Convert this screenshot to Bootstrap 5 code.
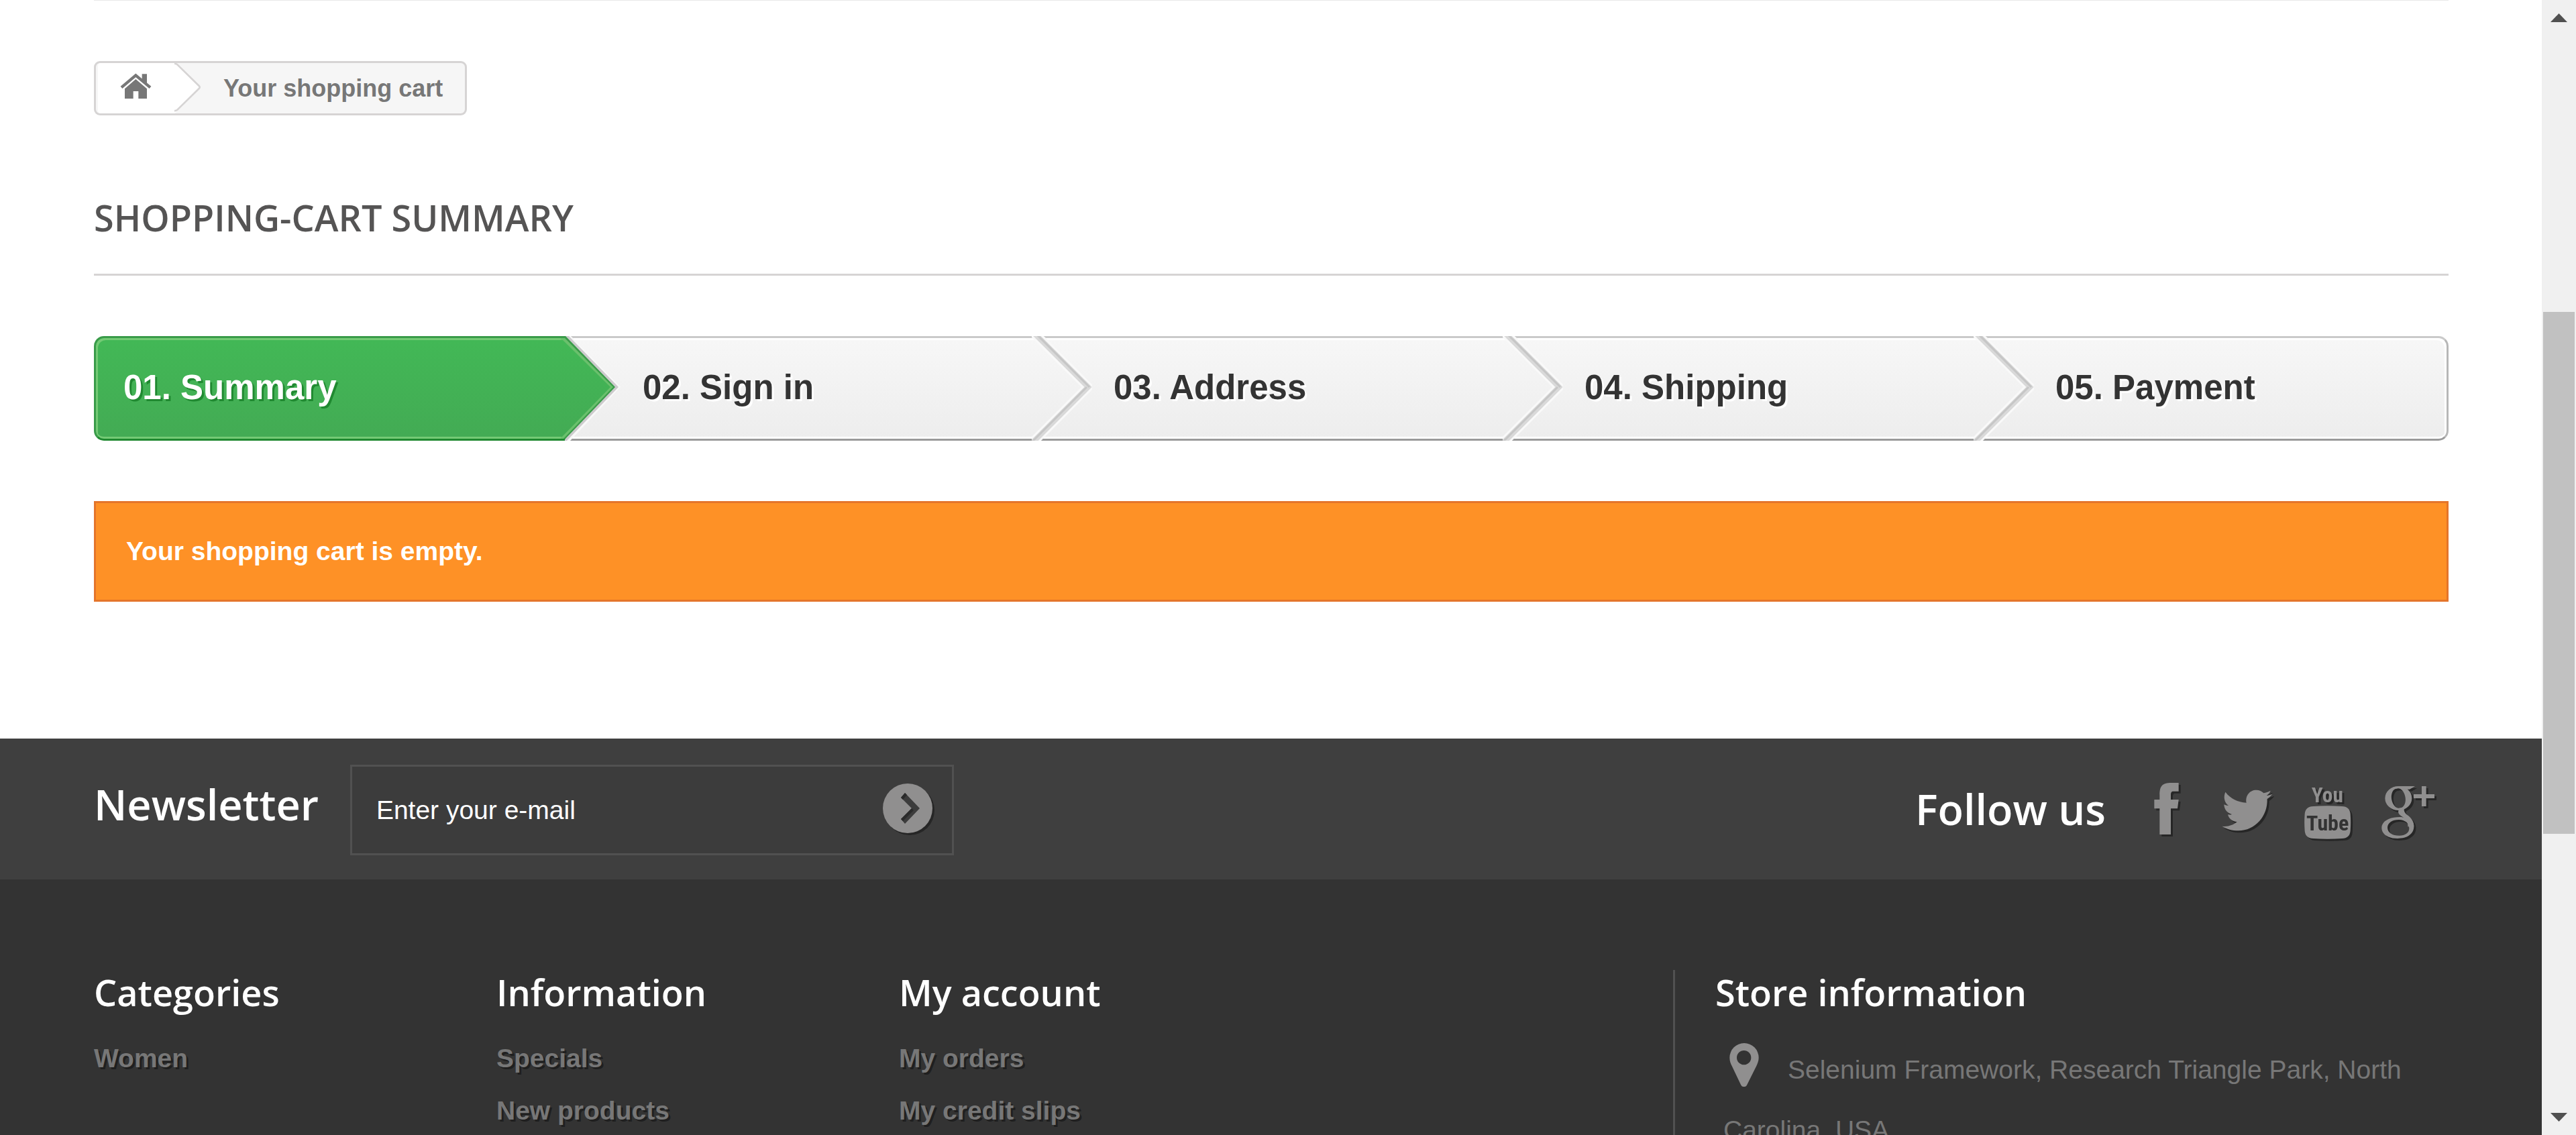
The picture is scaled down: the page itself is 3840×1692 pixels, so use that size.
<!DOCTYPE html>
<html lang="en">
<head>
<meta charset="utf-8">
<meta name="viewport" content="width=device-width, initial-scale=1">
<title>Order - My Store</title>
<link href="https://cdn.jsdelivr.net/npm/bootstrap@5.3.0/dist/css/bootstrap.min.css" rel="stylesheet">
<style>
html { height: 100%; }
body { height: 100%; overflow: hidden; background: #fff; color: #777; font: 39px/54px "Liberation Sans", Arial, sans-serif; }
.page-main { min-width: 0; overflow: hidden; }
.inner { padding: 0 139px 0 140px; }
.top-rule { height: 1px; background: #e9e9e9; }
a { text-decoration: none; }
svg { display: block; }
h1, h2, .bar-title { font-family: "Open Sans", sans-serif; font-weight: 600; margin: 0; }

.crumbs { margin-top: 90px; width: fit-content; height: 81px; border: 3px solid #d6d4d4; border-radius: 9px; background: #f6f6f6; font-size: 36px; font-weight: 700; overflow: hidden; }
.crumbs .here { color: #777; padding: 0 33px 0 32px; line-height: 75px; }

.page-heading { margin-top: 69px; padding: 50px 0 51px; font-size: 54px; line-height: 66px; color: #555454; text-transform: uppercase; border-bottom: 3px solid #d6d4d4; }

.steps { margin: 90px 0; padding: 0; list-style: none; }
.steps li { flex: 0 0 20%; min-width: 0; position: relative; height: 156px; padding-left: 116px; font-size: 51px; font-weight: 700; line-height: 148px; color: #333; text-shadow: 3px 3px 0 #fff; border: solid #b7b7b7; border-width: 3px 0; border-top-color: #cacaca; border-bottom-color: #9a9a9a; background: linear-gradient(#f7f7f7, #ededed); box-shadow: inset 0 3px 0 #fff, inset 0 -3px 0 #fff; }
.steps li:last-child { border-right-width: 3px; border-radius: 0 15px 15px 0; box-shadow: inset -3px 3px 0 #fff, inset 0 -3px 0 #fff; }
.steps li.current { padding-left: 41px; color: #fff; text-shadow: 3px 3px 0 #208931; border-color: #399b49; border-left-width: 3px; border-bottom-color: #208931; border-radius: 15px 0 0 15px; background: linear-gradient(#42b856, #43ab54); box-shadow: inset 3px 3px 0 #74ca75, inset 0 -3px 0 #74ca75; }
.steps .arrow { position: absolute; top: -3px; right: -84px; width: 90px; height: 156px; z-index: 1; }

.alert-empty { margin: 0; height: 150px; padding: 0 45px; border: 3px solid #e4752b; background: #fe9126; color: #fff; font-weight: 700; line-height: 144px; }

.social-bar { margin-top: 204px; height: 210px; padding-top: 3px; background: #3f3f3f; color: #fff; }
.bar-title { font-size: 63px; line-height: 72px; }
.bar-title.news { padding-bottom: 17px; }
.bar-title.follow { padding-bottom: 3px; margin-right: 31px; }
.mail-box { width: 900px; height: 135px; margin-left: 47px; border: 3px solid #515151; background: #3c3c3c; padding: 0 25px 0 36px; }
.mail-box input { color: #fff; font-size: 39px; border: 0; background: none; outline: 0; min-width: 0; padding: 0; }
.mail-box input::placeholder { color: #fff; opacity: 1; }
.mail-box button { border: 0; background: none; padding: 0; }
.social svg { width: 120px; height: 109px; fill: #908f8f; filter: drop-shadow(3px 3px 0 #262626); }
.social text { font-family: "Liberation Sans Narrow", "Roboto Condensed", "Open Sans Condensed", "DejaVu Sans Condensed", "Roboto", sans-serif; font-weight: 700; text-anchor: middle; }

.foot { background: #333; flex: 1; min-height: 0; overflow: hidden; padding-top: 135px; }
.foot h2 { font-size: 54px; line-height: 66px; color: #fff; }
.foot .links { width: 600px; }
.foot ul { list-style: none; margin: 39px 0 0; padding: 0; }
.foot li { line-height: 54px; margin-bottom: 24px; }
.foot li a { color: #777; font-weight: 700; text-shadow: 3px 3px 0 rgba(0,0,0,.4); }
.store { width: 1156px; min-height: 300px; border-left: 3px solid #515151; padding-left: 60px; }
.store p { margin: 38px 0 0; padding-left: 12px; line-height: 90px; }
.store svg { display: inline-block; vertical-align: -12px; margin: 0 43px 0 9px; }

.scroller { width: 51px; background: #f0f0f0; padding: 20px 2px; }
.scroller .thumb { height: 778px; margin-top: 432px; background: #c1c1c1; }
.scroller svg { margin: 0 auto; }
</style>
</head>
<body class="d-flex">
<svg width="0" height="0" class="position-absolute" aria-hidden="true">
  <symbol id="chev" viewBox="0 0 90 156">
    <path d="M4 -4L84 76 2 158" fill="none" stroke="#f9f9f9" stroke-width="14"/>
    <path d="M4 -4L84 76 2 158" fill="none" stroke="#d9d9d9" stroke-width="8"/>
    <path d="M6 -4L86 76" stroke="#c6c6c6" stroke-width="3"/>
    <path d="M82 76L0 158" stroke="#c6c6c6" stroke-width="3"/>
  </symbol>
</svg>
<div class="page-main flex-grow-1 d-flex flex-column">
  <main class="inner">
    <div class="top-rule"></div>
    <nav class="crumbs d-flex" aria-label="breadcrumb">
      <a href="#" aria-label="Home">
        <svg width="158" height="75" viewBox="39 42 474 225"><path d="M60 42H392L503 150 392 267H60Q48 267 48 252V57Q48 42 60 42z" fill="#fff"/><path d="M390 45Q398 44 404 50L500 144Q506 150 500 156L404 250Q398 256 390 255" fill="none" stroke="#d6d4d4" stroke-width="8"/><path fill="#777" d="M217 114L267 157V201H229V168H206V201H168V157zM245 91H267V134L245 116z"/><path d="M153 151L217 97 282 151" fill="none" stroke="#777" stroke-width="13"/></svg>
      </a>
      <span class="here">Your shopping cart</span>
    </nav>
    <h1 class="page-heading">Shopping-cart summary</h1>
    <ul class="steps d-flex">
      <li class="current">01. Summary
        <svg class="arrow" viewBox="0 0 90 156">
          <defs><linearGradient id="green" x1="0" y1="0" x2="0" y2="1"><stop offset="0" stop-color="#42b856"/><stop offset="1" stop-color="#43ab54"/></linearGradient></defs>
          <path d="M6 0H15L89 76 14 156H6z" fill="#f9f9f9"/><path d="M6 0H12L86 76 9 156H6z" fill="#cdcbcd"/><path d="M0 0H7L81 76 4 156H0z" fill="#399b49"/><path d="M0 153H7L4 156H0z" fill="#208931"/><path d="M0 3H6L78 76 4 153H0z" fill="#6ac06c"/><path d="M0 6H3L74 76 2 150H0z" fill="url(#green)"/>
        </svg>
      </li>
      <li>02. Sign in<svg class="arrow"><use href="#chev"/></svg></li>
      <li>03. Address<svg class="arrow"><use href="#chev"/></svg></li>
      <li>04. Shipping<svg class="arrow"><use href="#chev"/></svg></li>
      <li>05. Payment</li>
    </ul>
    <p class="alert-empty">Your shopping cart is empty.</p>
  </main>
  <section class="social-bar inner d-flex align-items-center pb-0">
    <label class="bar-title news" for="mail">Newsletter</label>
    <form class="mail-box d-flex align-items-center">
      <input id="mail" class="flex-grow-1" type="text" placeholder="Enter your e-mail">
      <button type="button" aria-label="Subscribe"><svg width="78" height="82"><g fill="#262626"><circle cx="40" cy="41" r="37"/></g><circle cx="37" cy="38" r="37" fill="#908f8f"/><path d="M33 15L55 38 33 61 27 54 43 38 27 22z" fill="#3c3c3c"/><path d="M27 22L33 15 36 18 30 25zM43 38L46 41 30 57 27 54z" fill="#2a2a2a"/></svg></button>
    </form>
    <h2 class="bar-title follow ms-auto">Follow us</h2>
    <div class="social d-flex">
      <a href="#" aria-label="Facebook"><svg viewBox="-60 24 360 327"><path d="M88 297V181H64V141H88V120C88 80 100 66 140 66H173V104H150C140 104 138 110 138 120V141H173L168 181H138V297z"/></svg></a>
      <a href="#" aria-label="Twitter"><svg viewBox="300 24 360 327"><path d="M367 260C395 263 415 256 434 241 412 239 398 226 393 208 399 209 405 209 411 207 389 201 377 184 376 163 383 167 389 168 396 168 376 152 373 128 382 107 405 136 438 153 476 155 470 122 492 98 520 98 534 98 545 103 553 112 563 110 574 106 584 101 581 110 575 117 566 123 575 122 583 119 592 116 586 124 578 132 569 138 572 215 515 280 440 280 413 280 388 273 367 260z"/></svg></a>
      <a href="#" aria-label="YouTube"><svg viewBox="660 24 360 327"><path d="M775 171Q839 167 903 171 938 172 941 205 944 243 941 281 938 314 903 315 839 319 775 315 740 314 737 281 734 243 737 205 740 172 775 171z"/><text x="838" y="154" font-size="94">You</text><text x="839" y="280" font-size="96" fill="#333">Tube</text></svg></a>
      <a href="#" aria-label="Google Plus"><svg viewBox="1020 24 360 327"><path fill-rule="evenodd" d="M1096 135A60 54 0 1 0 1216 135A60 54 0 1 0 1096 135zM1148 92A28 44 -10 1 0 1164 178A28 44 -10 1 0 1148 92z"/><path d="M1150 81H1230L1206 95H1184zM1186 172C1176 188 1182 200 1196 210 1216 224 1226 242 1225 262L1198 262C1200 240 1190 230 1175 219 1156 206 1150 198 1160 182z"/><path fill-rule="evenodd" d="M1081 267C1081 238 1116 217 1168 219L1205 225C1218 236 1225 246 1225 262 1225 294 1196 315 1152 315 1110 315 1081 296 1081 267zM1107 266C1107 288 1128 302 1160 302 1186 302 1204 290 1204 270 1204 246 1186 232 1158 231 1128 231 1107 245 1107 266z"/><path d="M1260 81h20v36h37v18h-37v36h-20v-36h-36v-18h36z"/></svg></a>
    </div>
  </section>
  <footer class="foot inner d-flex">
    <section class="links"><h2>Categories</h2><ul><li><a href="#">Women</a></li></ul></section>
    <section class="links"><h2>Information</h2><ul><li><a href="#">Specials</a></li><li><a href="#">New products</a></li></ul></section>
    <section class="links"><h2>My account</h2><ul><li><a href="#">My orders</a></li><li><a href="#">My credit slips</a></li></ul></section>
    <section class="store ms-auto"><h2>Store information</h2><p><svg width="44" height="65" viewBox="53 47 132 195"><path fill="#908f8f" fill-rule="evenodd" d="M54 112a65 65 0 0 1 130 0c0 14-5 26-10 37L132 233a15 15 0 0 1-28 0L64 149C58 138 54 126 54 112zM86 112a32 32 0 1 0 64 0 32 32 0 1 0-64 0z"/></svg>Selenium Framework, Research Triangle Park, North Carolina, USA</p></section>
  </footer>
</div>
<aside class="scroller flex-shrink-0 d-flex flex-column" aria-hidden="true">
  <svg width="25" height="13"><path d="M0 13L12.500 0 25 13z" fill="#505050"/></svg>
  <div class="thumb"></div>
  <svg class="mt-auto" width="25" height="13"><path d="M0 0L12.500 13 25 0z" fill="#505050"/></svg>
</aside>
<script src="https://cdn.jsdelivr.net/npm/bootstrap@5.3.0/dist/js/bootstrap.bundle.min.js"></script>
</body>
</html>
